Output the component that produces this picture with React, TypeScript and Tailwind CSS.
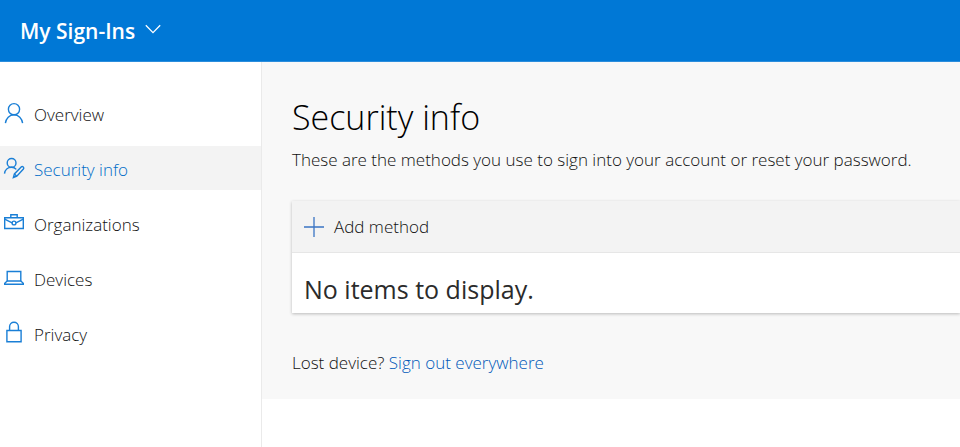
import type { ReactNode } from 'react';

interface NavItem {
  label: string;
  icon: ReactNode;
  active?: boolean;
}

function NavIcon({ children }: { children: ReactNode }) {
  return (
    <svg
      viewBox="0 0 20 20"
      className="w-5 h-5 shrink-0 overflow-visible text-[#1a7fd6]"
      fill="none"
      stroke="currentColor"
      strokeWidth="1.4"
      aria-hidden="true"
    >
      {children}
    </svg>
  );
}

const navItems: NavItem[] = [
  {
    label: 'Overview',
    icon: (
      <NavIcon>
        <circle cx="10" cy="6.2" r="5.6" />
        <path d="M1.4 20.2c.6-4.8 4-8.4 8.6-8.4s8 3.6 8.6 8.4" />
      </NavIcon>
    ),
  },
  {
    label: 'Security info',
    active: true,
    icon: (
      <NavIcon>
        <circle cx="7.6" cy="4.9" r="4.4" />
        <path d="M.5 15.6C.9 12 3.8 9.3 7.6 9.3c1.9 0 3.5.8 4.7 2.1" />
        <path d="M9.4 19.5l1-3.6 6.8-7c1.4-1.2 3.4.5 2.2 2.1l-6.6 7.2z" />
        <path d="M10.4 15.9l2.4 2.3" />
      </NavIcon>
    ),
  },
  {
    label: 'Organizations',
    icon: (
      <NavIcon>
        <path d="M.7 4.7h18.6v10.8H.7z" />
        <path d="M6.8 4.7V1.7h6.4v3" />
        <path d="M.7 6.2l7.4 3.6M19.3 6.2l-7.4 3.6" />
        <circle cx="10" cy="10" r="1.9" />
      </NavIcon>
    ),
  },
  {
    label: 'Devices',
    icon: (
      <NavIcon>
        <path d="M3.2 3.5h13.6v9.5H3.2z" />
        <path d="M3.2 13L.7 15.2v1h18.6v-1L16.8 13" />
      </NavIcon>
    ),
  },
  {
    label: 'Privacy',
    icon: (
      <NavIcon>
        <path d="M2.9 7.5h14.2v11.2H2.9z" />
        <path d="M5.6 7.5V3.6a4.4 4.4 0 0 1 8.8 0v3.9" />
      </NavIcon>
    ),
  },
];

function Header() {
  return (
    <header className="flex items-center h-[62px] pl-5 bg-[#0078d6] border-b border-[#2b8ddc]">
      <button type="button" className="flex items-center gap-2.5 text-white">
        <span className="text-[21px] leading-7 font-semibold">My Sign-Ins</span>
        <svg viewBox="0 0 16 10" className="w-4 h-2.5 mb-1" fill="none" stroke="currentColor" strokeWidth="1.3" aria-hidden="true">
          <path d="M.8 1.2L8 8.6l7.2-7.4" />
        </svg>
      </button>
    </header>
  );
}

function Sidebar() {
  return (
    <nav className="w-[262px] shrink-0 pt-[29px] bg-white border-r border-[#eaeaea]">
      <ul className="flex flex-col gap-[11px]">
        {navItems.map((item) => (
          <li key={item.label}>
            <a
              href="#"
              aria-current={item.active ? 'page' : undefined}
              className={`flex items-center gap-2.5 h-11 pl-1 text-[17px] leading-6 ${
                item.active ? 'bg-[#f3f3f3] text-[#006cc8]' : 'text-[#111]'
              }`}
            >
              {item.icon}
              <span className="pt-1">{item.label}</span>
            </a>
          </li>
        ))}
      </ul>
    </nav>
  );
}

export default function App() {
  return (
    <div className="min-h-screen flex flex-col bg-white font-['Open_Sans','Noto_Sans',sans-serif] font-light">
      <Header />
      <div className="flex flex-1">
        <Sidebar />
        <main className="flex-1 min-w-0">
          <div className="bg-[#f8f8f8] pl-[30px] pt-8 pb-6">
            <h1 className="text-[34px] leading-[46px] text-black">Security info</h1>
            <p className="mt-2 text-[17px] leading-6 whitespace-nowrap text-[#111]">
              These are the methods you use to sign into your account or reset your password.
            </p>

            <section className="mt-[29px] bg-white shadow-[0_1px_3px_rgba(0,0,0,0.25)]">
              <div className="flex items-center h-[52px] pl-3 bg-[#f3f3f3] border-b border-[#e6e6e6]">
                <button type="button" className="flex items-center gap-2.5 text-[17px] leading-6 text-[#111]">
                  <svg viewBox="0 0 20 20" className="w-5 h-5 text-[#3a74c4]" fill="none" stroke="currentColor" strokeWidth="1.3" aria-hidden="true">
                    <path d="M10 0v20M0 10h20" />
                  </svg>
                  Add method
                </button>
              </div>
              <p className="pl-3 pt-5 pb-2 text-[25px] leading-8 font-normal text-[#2b2b2b]">No items to display.</p>
            </section>

            <p className="mt-[38px] text-[17px] leading-6 text-[#111]">
              Lost device?{' '}
              <a href="#" className="text-[#0058b8]">
                Sign out everywhere
              </a>
            </p>
          </div>
        </main>
      </div>
    </div>
  );
}
